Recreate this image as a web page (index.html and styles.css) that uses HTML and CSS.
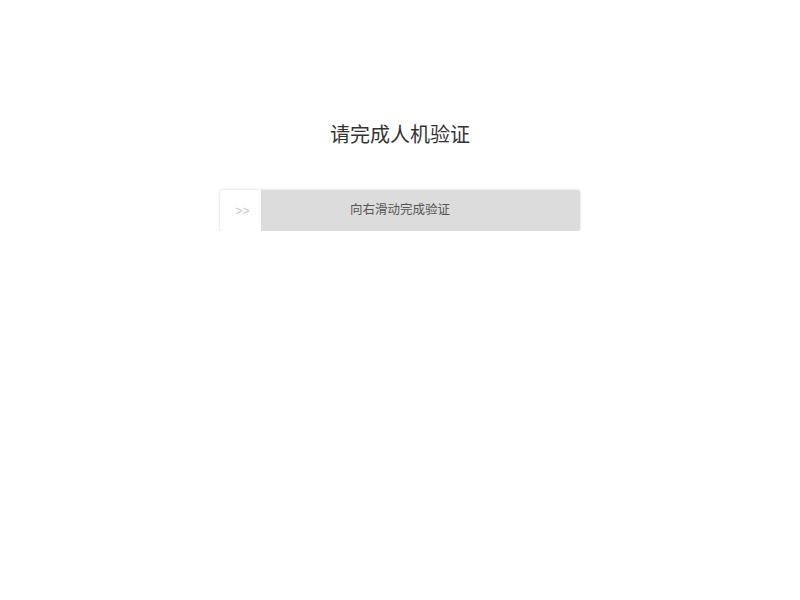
FILE: index.html
```html
<!DOCTYPE html>
<html lang="zh">
<head>
<meta charset="utf-8">
<title>人机验证</title>
<link rel="stylesheet" href="styles.css">
</head>
<body>
<div class="page">
  <h1 class="title">请完成人机验证</h1>
  <div class="slider">
    <div class="handle">&gt;&gt;</div>
    <div class="track-text">向右滑动完成验证</div>
  </div>
</div>
</body>
</html>
```

FILE: styles.css
```css
html, body {
  margin: 0;
  padding: 0;
  background: #fff;
  font-family: "Noto Sans", "Noto Sans CJK SC", sans-serif;
}
.page {
  display: flex;
  flex-direction: column;
  align-items: center;
  padding-top: 120px;
}
.title {
  margin: 0;
  font-size: 20px;
  font-weight: normal;
  color: #333;
  line-height: 30px;
}
.slider {
  margin-top: 40px;
  width: 360px;
  height: 41px;
  background: #dcdcdc;
  border-radius: 3px;
  box-shadow: 0 0 3px rgba(0,0,0,0.18);
  position: relative;
  display: flex;
  align-items: center;
  justify-content: center;
}
.handle {
  position: absolute;
  left: 0;
  top: 0;
  width: 41px;
  height: 41px;
  padding-left: 4px;
  box-sizing: border-box;
  background: #fff;
  border-radius: 3px 0 0 3px;
  display: flex;
  align-items: center;
  justify-content: center;
  font-size: 12px;
  color: #c8c8c8;
  font-family: "Liberation Sans", sans-serif;
}
.track-text {
  font-size: 12.5px;
  line-height: 16px;
  margin-top: -2px;
  color: #555;
}
```
